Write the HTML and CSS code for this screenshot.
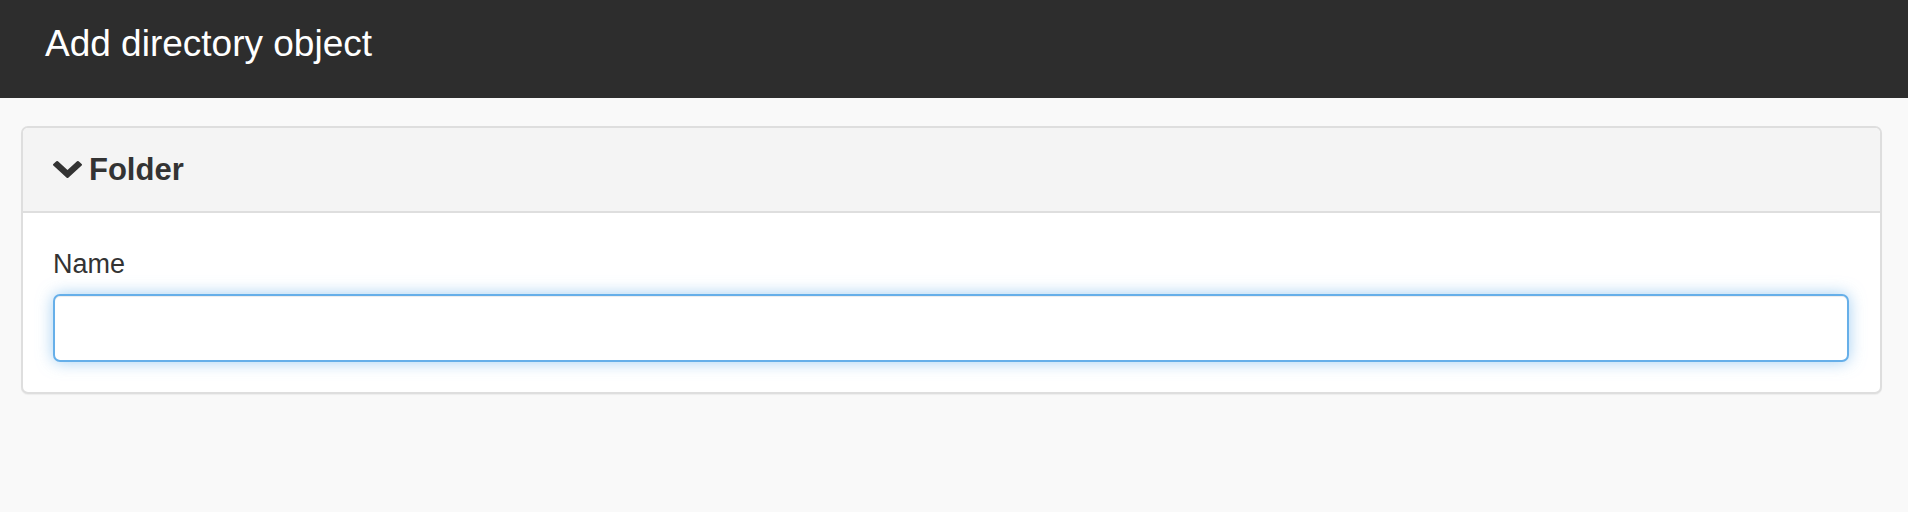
FILE: index.html
```html
<!DOCTYPE html>
<html lang="en">
<head>
<meta charset="utf-8">
<title>Add directory object</title>
<link rel="stylesheet" href="styles.css">
</head>
<body>
<header class="topbar">
  <h1 class="topbar-title">Add directory object</h1>
</header>
<main class="content">
  <section class="panel">
    <div class="panel-heading">
      <svg class="chevron" viewBox="90 530 1612 1040" preserveAspectRatio="none" aria-hidden="true">
        <path d="M1683 808l-742 741q-19 19-45 19t-45-19l-742-741q-19-19-19-45.5t19-45.5l166-165q19-19 45-19t45 19l531 531 531-531q19-19 45-19t45 19l166 165q19 19 19 45.5t-19 45.5z" fill="#333"/>
      </svg>
      <h2 class="panel-title">Folder</h2>
    </div>
    <div class="panel-body">
      <label class="field-label" for="name">Name</label>
      <input class="field-input" id="name" type="text">
    </div>
  </section>
</main>
</body>
</html>
```
FILE: styles.css
```css
* { box-sizing: border-box; }
html, body { margin: 0; padding: 0; }
body {
  background: #f9f9f9;
  font-family: "Liberation Sans", Arial, Helvetica, sans-serif;
  color: #333;
  height: 512px;
  overflow: hidden;
}
.topbar {
  height: 98px;
  background: #2d2d2d;
  display: flex;
  align-items: center;
  padding: 0 0 10px 45px;
}
.topbar-title {
  margin: 0;
  font-size: 37px;
  font-weight: normal;
  color: #fff;
  line-height: 1.15;
}
.content {
  padding: 28px 26px 0 21px;
}
.panel {
  background: #fff;
  border: 2px solid #dedede;
  border-radius: 7px;
  overflow: hidden;
  box-shadow: 0 1px 1px rgba(0,0,0,0.05);
}
.panel-heading {
  height: 85px;
  background: #f4f4f4;
  border-bottom: 2px solid #dedede;
  display: flex;
  align-items: center;
  padding: 0 0 0 30px;
  gap: 7px;
}
.chevron {
  width: 29px;
  height: 17px;
  display: block;
}
.panel-title {
  margin: 0;
  font-size: 31px;
  font-weight: bold;
  line-height: 1.15;
  color: #333;
}
.panel-body {
  padding: 36px 31px 30px 30px;
}
.field-label {
  display: block;
  font-size: 27px;
  line-height: 30px;
  margin-bottom: 15px;
  color: #333;
}
.field-input {
  display: block;
  width: 100%;
  height: 68px;
  border: 2px solid #66afe9;
  border-radius: 7px;
  background: #fff;
  outline: none;
  font-family: inherit;
  font-size: 26px;
  padding: 0 20px;
  box-shadow: inset 0 1px 1px rgba(0,0,0,0.075), 0 0 16px rgba(102,175,233,0.6);
}
```
